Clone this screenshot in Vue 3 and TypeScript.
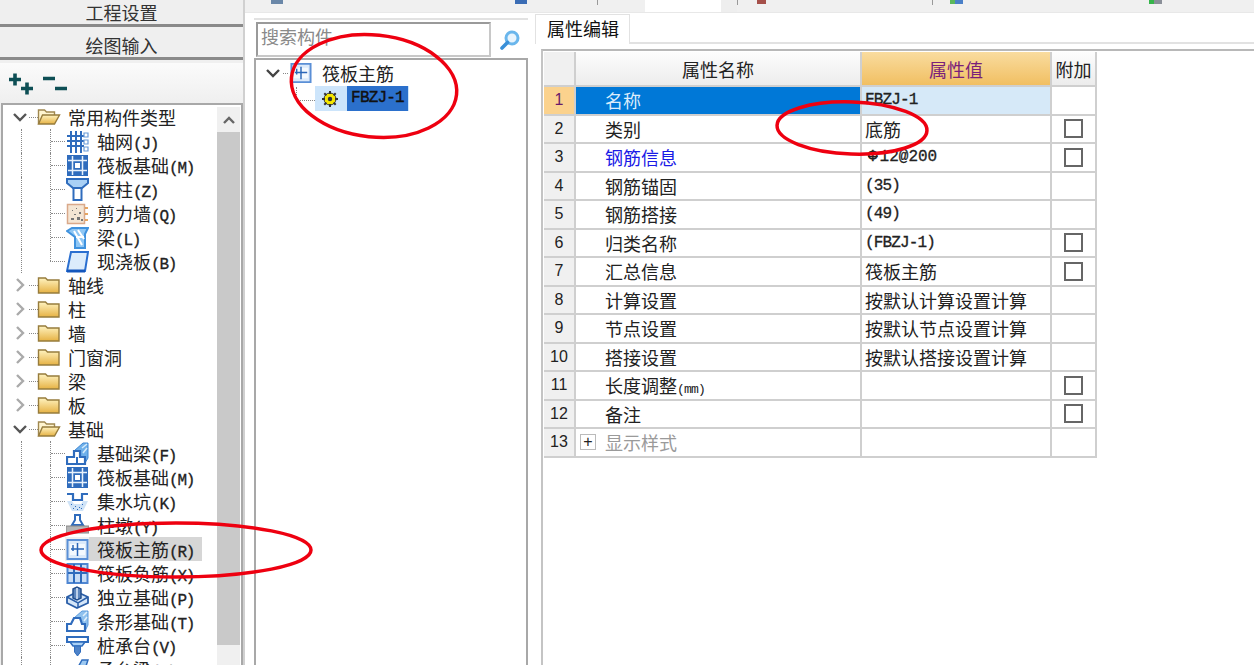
<script setup lang="ts">
interface Shape { d: string; fill?: string; stroke?: string; w?: number }
interface LeafRow { kind: 'leaf'; label: string; code: string; icon: string; selected?: boolean; last?: boolean }
interface FolderRow { kind: 'open' | 'closed'; label: string }
type Row = LeafRow | FolderRow

const B = '#2f6cbd'
const L = '#a9d0f5'
const raft: Shape[] = [
  { d: 'M1 1h21v21H1z', fill: B },
  { d: 'M6.500 2v19M16.500 2v19M2 6.500h19M2 16.500h19', stroke: '#e8f1fb', w: 1.5 },
  { d: 'M9 9h5v5H9z', fill: '#fff' },
]
const rebarMain: Shape[] = [
  { d: 'M1.500 2h20v19h-20z', fill: '#dceafa', stroke: '#5a8fd6', w: 2 },
  { d: 'M4 6h15v11H4z', fill: '#f4f9fe' },
  { d: 'M5 11h13M11.500 5v13M7 7v6', stroke: '#2a66b8', w: 1.500 },
]
const icons: Record<string, Shape[]> = {
  grid: [
    { d: 'M5 1v22M10 1v22M15 1v22M1 6h17M1 11h17M1 16h17', stroke: B, w: 2 },
    { d: 'M18 3h4v4h-4zM18 10h4v4h-4zM18 17h4v4h-4z', fill: '#fff', stroke: '#6a9bd8', w: 1.200 },
  ],
  raft,
  column: [
    { d: 'M1 1h21v4l-6 5H7L1 5z', fill: L, stroke: B, w: 2 },
    { d: 'M7.500 10h8v12h-8z', fill: '#fff', stroke: B, w: 2 },
  ],
  wall: [
    { d: 'M1.500 2.500h17v19h-17z', fill: '#f4e6d4', stroke: '#d9a98a', w: 1.500 },
    { d: 'M6 8h1v1H6zM10 6h1v1h-1zM13 10h2v2h-2zM8 12h2v1H8zM5 16h3v2H5zM11 15h3v3h-3zM15 17h2v2h-2z', fill: '#777' },
    { d: 'M19 6h3M19 12h3M19 18h3', stroke: '#e08a30', w: 1.500 },
  ],
  beam: [
    { d: 'M1 5l5-3h16l-3 6v14H9V11z', fill: '#8fc7f5', stroke: '#3f92de', w: 2 },
    { d: 'M8 5l8 14M12 4l6 9M10 11h8', stroke: '#fff', w: 2 },
  ],
  slab: [
    { d: 'M5 2h17l-3 19H1z', fill: '#dcecfb', stroke: '#2a6fd0', w: 2 },
    { d: 'M1 21h18', stroke: '#1457bd', w: 3 },
  ],
  fbeam: [
    { d: 'M8 9l9-8h5v15l-3 5h-4v-6l-7-6z', fill: '#6fb0ea', stroke: '#3f87d3', w: 1 },
    { d: 'M16 6l5-4M17 11l4-5', stroke: '#d6ebfb', w: 1.500 },
    { d: 'M8 9h6v6h5v7H1v-7h7z', fill: '#fff', stroke: B, w: 2.200 },
    { d: 'M10 15h2v6h-2z', fill: B },
  ],
  pit: [
    { d: 'M1 4h6v6h9V4h6', fill: 'none', stroke: B, w: 2.200 },
    { d: 'M1 11h5l2 3h7l2-3h5l-5 10H6z', fill: '#cfe3f7' },
    { d: 'M5 14h1v1H5zM9 16h1v1H9zM13 17h1v1h-1zM16 14h1v1h-1zM7 18h1v1H7zM11 19h1v1h-1zM15 18h1v1h-1z', fill: B },
  ],
  pier: [
    { d: 'M9 1h5v5l3 5H6l3-5z', fill: '#fff', stroke: B, w: 2 },
    { d: 'M0 12h23v7H0z', fill: '#b5b5b5', stroke: '#888', w: 1 },
  ],
  rebarMain,
  rebarNeg: [
    { d: 'M1.500 2h20v19h-20z', fill: '#c9def6', stroke: '#4f86d2', w: 2 },
    { d: 'M8 2v19M15 2v19M2 11h19', stroke: '#2f6cbd', w: 2 },
    { d: 'M5 6h13v3', stroke: '#5a8fd6', w: 1.400 },
  ],
  solo: [
    { d: 'M1 11l10-5 11 5v6l-11 5-10-5z', fill: '#d5e6f8', stroke: '#2a5ea8', w: 1.800 },
    { d: 'M1 11l11 6 10-6M12 17v5', stroke: '#2a5ea8', w: 1.500 },
    { d: 'M7 3l4-2 4 2v9l-4 2-4-2z', fill: '#5d86bd', stroke: '#24508f', w: 1.500 },
    { d: 'M11 2v11', stroke: '#dfeafa', w: 1.500 },
  ],
  strip: [
    { d: 'M8 8l8-7h6v14l-3 6-3-6z', fill: '#8fc1ee', stroke: '#5d9bdb', w: 1 },
    { d: 'M17 6l4-4M18 11l3-4', stroke: '#e0f0fc', w: 1.500 },
    { d: 'M8 8h6l2 6h3v7H1v-7h4z', fill: '#fff', stroke: B, w: 2.200 },
  ],
  cap: [
    { d: 'M1 3h21v5H1z', fill: '#fff', stroke: B, w: 2.200 },
    { d: 'M4 8h15l-3 4H7z', fill: L, stroke: B, w: 1.500 },
    { d: 'M8.500 12h6v6l-3 4-3-4z', fill: '#4d82c8', stroke: B, w: 1 },
  ],
  cbeam: [
    { d: 'M6 20l10-18h6l-6 18z', fill: '#9cc8f0', stroke: B, w: 1.500 },
  ],
}

const leaf = (label: string, code: string, icon: string, extra: Partial<LeafRow> = {}): LeafRow =>
  ({ kind: 'leaf', label, code, icon, ...extra })

const rows: Row[] = [
  { kind: 'open', label: '常用构件类型' },
  leaf('轴网', '(J)', 'grid'),
  leaf('筏板基础', '(M)', 'raft'),
  leaf('框柱', '(Z)', 'column'),
  leaf('剪力墙', '(Q)', 'wall'),
  leaf('梁', '(L)', 'beam'),
  leaf('现浇板', '(B)', 'slab', { last: true }),
  { kind: 'closed', label: '轴线' },
  { kind: 'closed', label: '柱' },
  { kind: 'closed', label: '墙' },
  { kind: 'closed', label: '门窗洞' },
  { kind: 'closed', label: '梁' },
  { kind: 'closed', label: '板' },
  { kind: 'open', label: '基础' },
  leaf('基础梁', '(F)', 'fbeam'),
  leaf('筏板基础', '(M)', 'raft'),
  leaf('集水坑', '(K)', 'pit'),
  leaf('柱墩', '(Y)', 'pier'),
  leaf('筏板主筋', '(R)', 'rebarMain', { selected: true }),
  leaf('筏板负筋', '(X)', 'rebarNeg'),
  leaf('独立基础', '(P)', 'solo'),
  leaf('条形基础', '(T)', 'strip'),
  leaf('桩承台', '(V)', 'cap'),
  leaf('承台梁', '(C)', 'cbeam'),
]

interface Prop { name: string; unit?: string; value?: string; code?: string; rebar?: boolean; check?: boolean; tone?: string; plus?: boolean }
const props: Prop[] = [
  { name: '名称', code: 'FBZJ-1', tone: 'active' },
  { name: '类别', value: '底筋', check: true },
  { name: '钢筋信息', code: '12@200', rebar: true, check: true, tone: 'link' },
  { name: '钢筋锚固', code: '(35)' },
  { name: '钢筋搭接', code: '(49)' },
  { name: '归类名称', code: '(FBZJ-1)', check: true },
  { name: '汇总信息', value: '筏板主筋', check: true },
  { name: '计算设置', value: '按默认计算设置计算' },
  { name: '节点设置', value: '按默认节点设置计算' },
  { name: '搭接设置', value: '按默认搭接设置计算' },
  { name: '长度调整', unit: '(mm)', check: true },
  { name: '备注', check: true },
  { name: '显示样式', tone: 'muted', plus: true },
]
</script>

<template>
  <div class="page">
    <aside class="left">
      <button class="nav-btn nav-first">工程设置</button>
      <button class="nav-btn">绘图输入</button>
      <div class="tools">
        <svg width="26" height="26" viewBox="0 0 26 26">
          <path d="M1 9.500h12M7 3.500v12M13 18.500h12M19 12.500v12" stroke="#0e4f55" stroke-width="3.600" fill="none" />
        </svg>
        <svg width="25" height="26" viewBox="0 0 25 26">
          <path d="M0 8.500h12M12 18.500h12" stroke="#0e4f55" stroke-width="3.600" fill="none" />
        </svg>
      </div>
      <div class="tree">
        <div class="tree-list">
          <div v-for="(r, i) in rows" :key="i" class="row" :class="r.kind === 'leaf' ? ['leaf', { last: r.last }] : 'folder-row'">
            <template v-if="r.kind === 'leaf'">
              <span class="stem" />
              <span class="leaf-icon" :class="{ 'icon-sel': r.selected }">
                <svg width="23" height="23" viewBox="0 0 23 23">
                  <path v-for="(s, j) in icons[r.icon]" :key="j" :d="s.d" :fill="s.fill ?? 'none'" :stroke="s.stroke ?? 'none'" :stroke-width="s.w ?? 0" />
                </svg>
              </span>
              <span class="leaf-label" :class="{ selected: r.selected }">{{ r.label }}<span class="code">{{ r.code }}</span></span>
            </template>
            <template v-else>
              <svg class="chev" width="14" height="14" viewBox="0 0 14 14">
                <path v-if="r.kind === 'open'" d="M1 4l6 6 6-6" stroke="#555" stroke-width="2.400" fill="none" />
                <path v-else d="M4 1l6 6-6 6" stroke="#aaa" stroke-width="2.400" fill="none" />
              </svg>
              <span class="dash" />
              <svg width="24" height="20" viewBox="0 0 24 20" class="folder">
                <defs>
                  <linearGradient id="fg" x1="0" y1="0" x2="0" y2="1">
                    <stop offset="0" stop-color="#fff3c0" />
                    <stop offset="1" stop-color="#e6b244" />
                  </linearGradient>
                </defs>
                <template v-if="r.kind === 'open'">
                  <path d="M1.500 17V3h6l2 2h8v3" fill="#fff5d0" stroke="#a08850" stroke-width="1.400" />
                  <path d="M1.500 17l4-9h17l-5 9z" fill="url(#fg)" stroke="#977c3c" stroke-width="1.400" />
                </template>
                <template v-else>
                  <path d="M1.500 18V3h7l2 2h11.500v13z" fill="url(#fg)" stroke="#977c3c" stroke-width="1.400" />
                </template>
              </svg>
              <span class="folder-label">{{ r.label }}</span>
            </template>
          </div>
        </div>
        <div class="scroll">
          <div class="scroll-up">
            <svg width="12" height="8" viewBox="0 0 12 8"><path d="M1 7l5-5 5 5" stroke="#666" stroke-width="2.400" fill="none" /></svg>
          </div>
          <div class="scroll-thumb" />
        </div>
      </div>
    </aside>

    <main class="main">
      <div class="strip">
        <span class="strip-ico ico-a" />
        <span class="strip-ico ico-b" />
        <span class="strip-sep sep-a" />
        <span class="strip-white" />
        <span class="strip-sep sep-b" />
        <span class="strip-ico ico-c" />
        <span class="strip-sep sep-c" />
        <span class="strip-ico ico-d" />
        <span class="strip-ico ico-e" />
      </div>
      <div class="body">
        <section class="mid">
          <div class="search">
            <div class="search-box">搜索构件</div>
            <svg width="24" height="24" viewBox="0 0 24 24" class="search-ico">
              <circle cx="14" cy="10" r="6" fill="#e8f4fd" stroke="#6ab6ec" stroke-width="3" />
              <path d="M9.500 14.500L4 20" stroke="#3a90d8" stroke-width="3.600" stroke-linecap="round" />
            </svg>
          </div>
          <div class="mid-tree">
            <div class="mt-row">
              <svg class="chev" width="14" height="14" viewBox="0 0 14 14"><path d="M1 4l6 6 6-6" stroke="#444" stroke-width="2.400" fill="none" /></svg>
              <span class="mt-dash" />
              <svg width="22" height="22" viewBox="0 0 23 23">
                <path v-for="(s, j) in rebarMain" :key="j" :d="s.d" :fill="s.fill ?? 'none'" :stroke="s.stroke ?? 'none'" :stroke-width="s.w ?? 0" />
              </svg>
              <span class="mt-label">筏板主筋</span>
            </div>
            <div class="mt-row mt-child">
              <span class="mt-stem" />
              <span class="mt-sel">
                <svg width="18" height="18" viewBox="0 0 18 18" class="gear">
                  <circle cx="9" cy="9" r="6" fill="#f5e600" stroke="#333" stroke-width="1" />
                  <path d="M9 1v3M9 14v3M1 9h3M14 9h3M3.300 3.300l2.100 2.100M12.600 12.600l2.100 2.100M3.300 14.700l2.100-2.100M12.600 5.400l2.100-2.100" stroke="#333" stroke-width="2" />
                  <circle cx="9" cy="9" r="2.200" fill="#333" />
                </svg>
                <span class="mt-name">FBZJ-1</span>
              </span>
            </div>
          </div>
        </section>

        <section class="right">
          <div class="tabs"><span class="tab">属性编辑</span></div>
          <div class="sheet">
            <div class="grid">
              <div class="cell head corner" />
              <div class="cell head">属性名称</div>
              <div class="cell head head-val">属性值</div>
              <div class="cell head">附加</div>
              <template v-for="(p, i) in props" :key="i">
                <div class="cell num" :class="{ 'num-on': p.tone === 'active' }">{{ i + 1 }}</div>
                <div class="cell name" :class="p.tone">
                  <span v-if="p.plus" class="plus">+</span>
                  <span :class="{ 'name-pad': !p.plus }">{{ p.name }}<span v-if="p.unit" class="unit">{{ p.unit }}</span></span>
                </div>
                <div class="cell val" :class="{ 'val-on': p.tone === 'active' }">
                  <template v-if="p.value">{{ p.value }}</template>
                  <span v-else-if="p.code" class="code" :class="{ 'rebar-row': p.rebar }"><span v-if="p.rebar" class="rebar">Φ</span>{{ p.code }}</span>
                </div>
                <div class="cell add"><span v-if="p.check" class="check" /></div>
              </template>
            </div>
          </div>
        </section>
      </div>
    </main>

    <svg class="marks" width="1254" height="665" viewBox="0 0 1254 665">
      <g fill="none" stroke="#ee0010" stroke-width="3.500">
        <ellipse cx="374" cy="86" rx="83" ry="51" transform="rotate(6 374 86)" />
        <ellipse cx="852" cy="128" rx="75" ry="26" transform="rotate(2 852 128)" />
        <ellipse cx="176" cy="550" rx="135" ry="27" />
      </g>
    </svg>
  </div>
</template>

<style>
html, body { margin: 0; background: #fff; }
</style>

<style scoped>
.page {
  position: relative;
  display: flex;
  width: 1254px;
  height: 665px;
  overflow: hidden;
  background: #fff;
  color: #222;
  font-family: "Noto Sans CJK SC", "Liberation Sans", sans-serif;
  font-size: 18px;
}
.code {
  font-family: "Liberation Mono", monospace;
  font-size: 16px;
  letter-spacing: -1.200px;
  -webkit-text-stroke: 0.3px #222;
  color: #222;
}
.left {
  width: 245px;
  flex: none;
  display: flex;
  flex-direction: column;
  background: #f0f0f0;
  box-sizing: border-box;
  border-right: 2px solid #d0d0d0;
}
.nav-btn {
  height: 30px;
  margin: 0 0 3px;
  padding: 0;
  border: 0;
  border-bottom: 3px solid #8a8a8a;
  background: #efefef;
  font: inherit;
  line-height: 26px;
  color: #333;
}
.nav-btn:not(.nav-first) { padding-top: 2px; }
.nav-first { height: 27px; line-height: 24px; }
.tools {
  height: 40px;
  padding-left: 8px;
  display: flex;
  align-items: center;
  gap: 9px;
  background: linear-gradient(#fbfbfb, #efefef);
  box-sizing: border-box;
}
.tree {
  flex: 1;
  min-height: 0;
  margin-left: 1px;
  display: flex;
  background: #fff;
  border: 2px solid #a8a8a8;
  border-bottom: 0;
  box-sizing: border-box;
  width: 242px;
  overflow: hidden;
}
.tree-list { flex: 1; min-width: 0; }
.row {
  height: 24px;
  display: flex;
  align-items: center;
  white-space: nowrap;
  position: relative;
}
.folder-row { padding-left: 10px; }
.chev { flex: none; }
.dash {
  width: 9px;
  margin-left: 2px;
  border-top: 1px dotted #888;
}
.folder { margin-left: -1px; flex: none; }
.folder-label { margin-left: 7px; }
.leaf { padding-left: 47px; }
.leaf::before {
  content: "";
  position: absolute;
  left: 18px;
  top: 0;
  bottom: 0;
  border-left: 1px dotted #888;
}
.stem {
  width: 15px;
  height: 24px;
  flex: none;
  box-sizing: border-box;
  position: relative;
  border-left: 1px dotted #888;
}
.stem::after {
  content: "";
  position: absolute;
  left: 0;
  right: 0;
  top: 12px;
  border-top: 1px dotted #888;
}
.last .stem { border-left: 0; }
.last .stem::before {
  content: "";
  position: absolute;
  left: 0;
  top: 0;
  height: 12px;
  border-left: 1px dotted #888;
}
.leaf-icon {
  width: 24px;
  height: 24px;
  flex: none;
  display: flex;
  align-items: center;
  justify-content: center;
}
.icon-sel { background: #efefef; }
.leaf-label {
  padding: 0 8px;
  height: 24px;
  line-height: 24px;
}
.selected { background: #d6d6d6; }
.scroll {
  width: 23px;
  flex: none;
  margin: 2px 1px 0 0;
  background: #f0f0f0;
  display: flex;
  flex-direction: column;
}
.scroll-up {
  height: 25px;
  display: flex;
  align-items: center;
  justify-content: center;
}
.scroll-thumb { height: 513px; background: #c9c9c9; }

.main { flex: 1; min-width: 0; display: flex; flex-direction: column; }
.strip {
  position: relative;
  height: 13px;
  flex: none;
  background: #f0f0f0;
  border-bottom: 1px solid #e8e8e8;
  box-sizing: border-box;
}
.strip-ico { position: absolute; top: 0; height: 4px; }
.ico-a { left: 26px; width: 12px; background: #6a87a8; }
.ico-b { left: 270px; width: 12px; background: #3b6db5; }
.ico-c { left: 512px; width: 9px; background: #a5504a; }
.ico-d { left: 705px; width: 13px; background: linear-gradient(90deg, #5cb85c 40%, #4a80c8 40%); }
.ico-e { left: 904px; width: 13px; background: linear-gradient(90deg, #35b54a 40%, #8a8f98 40%); }
.strip-sep { position: absolute; top: 0; height: 5px; width: 1px; background: #999; }
.sep-a { left: 352px; }
.sep-b { left: 492px; }
.sep-c { left: 687px; }
.strip-white { position: absolute; left: 400px; top: 0; width: 76px; height: 12px; background: #fff; border-right: 16px solid #eee; }

.body { flex: 1; min-height: 0; display: flex; }
.mid {
  width: 274px;
  flex: none;
  margin: 5px 0 0 9px;
  padding-top: 2px;
  border-top: 2px solid #e2e2e2;
  display: flex;
  flex-direction: column;
  box-sizing: border-box;
}
.search {
  height: 35px;
  flex: none;
  display: flex;
  align-items: center;
  margin-left: 2px;
}
.search-box {
  width: 235px;
  height: 35px;
  box-sizing: border-box;
  border: 2px solid #9a9a9a;
  border-right-color: #c8c8c8;
  border-bottom-color: #c8c8c8;
  color: #8a8a8a;
  padding-left: 3px;
  line-height: 24px;
}
.search-ico { margin-left: 7px; }
.mid-tree {
  flex: 1;
  margin-top: 1px;
  border: 2px solid #a8a8a8;
  border-bottom: 0;
  padding-top: 1px;
  box-sizing: border-box;
}
.mt-row {
  height: 24px;
  display: flex;
  align-items: center;
  padding-left: 10px;
  white-space: nowrap;
}
.mt-dash { width: 5px; margin: 0 2px 0 3px; border-top: 1px dotted #888; }
.mt-label { margin-left: 10px; }
.mt-child {
  padding-left: 40px;
  height: 25px;
  margin-top: 1px;
}
.mt-stem {
  width: 19px;
  height: 14px;
  margin-top: -10px;
  border-left: 1px dotted #888;
  border-bottom: 1px dotted #888;
  flex: none;
  box-sizing: border-box;
}
.mt-sel {
  display: flex;
  align-items: center;
  height: 25px;
  background: #cde5fb;
  padding-left: 6px;
  width: 94px;
  box-sizing: border-box;
}
.gear { flex: none; }
.mt-name {
  margin-left: 8px;
  width: 61px;
  height: 25px;
  background: #2b70cc;
  font-family: "Liberation Mono", monospace;
  font-size: 16px;
  letter-spacing: -0.800px;
  -webkit-text-stroke: 0.4px #111;
  line-height: 25px;
  text-align: center;
  color: #111;
}

.right {
  flex: 1;
  min-width: 0;
  margin-left: 7px;
  display: flex;
  flex-direction: column;
}
.tabs {
  height: 31px;
  flex: none;
  border-bottom: 2px solid #e2e2e2;
  box-sizing: border-box;
  padding-top: 1px;
}
.tab {
  display: block;
  width: 95px;
  height: 30px;
  padding-left: 11px;
  box-sizing: border-box;
  border: 1px solid #e2e2e2;
  border-width: 1px 1px 0 1px;
  background: #fff;
  line-height: 26px;
  color: #111;
}
.sheet {
  flex: 1;
  margin: 5px 0 0 6px;
  border-top: 2px solid #b8b8b8;
  border-left: 2px solid #c4c4c4;
  padding: 1px 0 0 1px;
}
.grid {
  display: grid;
  grid-template-columns: 32px 286px 190px 45px;
  grid-template-rows: 35px repeat(13, 28.500px);
  width: 553px;
}
.cell {
  border-right: 2px solid #cfcfcf;
  border-bottom: 2px solid #cfcfcf;
  box-sizing: border-box;
  display: flex;
  align-items: center;
  overflow: hidden;
  white-space: nowrap;
}
.head {
  justify-content: center;
  background: linear-gradient(#fdfdfd, #ececec);
  color: #222;
}
.corner { background: #f0f0f0; }
.head-val {
  background: linear-gradient(#f9dc9f, #f1bf62);
  color: #7a1f7a;
}
.num {
  justify-content: center;
  background: #f0f0f0;
  font-family: "Liberation Sans", sans-serif;
  font-size: 16px;
  color: #222;
}
.num-on { background: #fbd28d; color: #6a1a6a; }
.name-pad { padding-left: 29px; }
.name.active { background: #0078d7; color: #dcecfb; }
.name.link { color: #1a1ae6; }
.name.muted { color: #9a9a9a; }
.unit { font-family: "Liberation Mono", monospace; font-size: 13px; letter-spacing: -0.800px; }
.plus {
  width: 16px;
  height: 16px;
  margin: 0 9px 0 4px;
  box-sizing: border-box;
  border: 1px solid #bbb;
  color: #222;
  font: 16px/13px "Liberation Sans", sans-serif;
  text-align: center;
  flex: none;
}
.val { padding-left: 3px; }
.val .code { letter-spacing: -0.850px; }
.val .rebar-row { letter-spacing: 0; }
.val-on { background: #d6e9f8; }
.rebar { text-decoration: line-through; margin: 0 2px 0 3px; }
.add { justify-content: center; }
.check {
  width: 19px;
  height: 19px;
  box-sizing: border-box;
  border: 2px solid #666;
}
.marks { position: absolute; left: 0; top: 0; pointer-events: none; }
</style>
